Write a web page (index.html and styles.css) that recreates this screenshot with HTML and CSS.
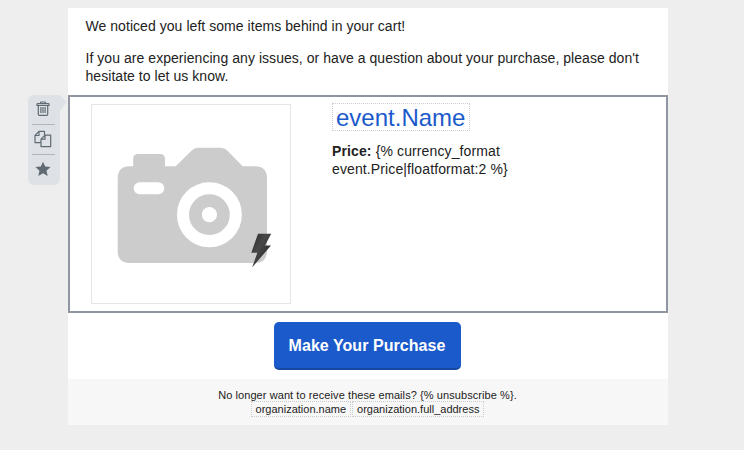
FILE: index.html
```
<!DOCTYPE html>
<html lang="en">
<head>
    <meta charset="UTF-8">
    <meta name="viewport" content="width=device-width, initial-scale=1.0">
    <title>Email editor</title>
    <link rel="stylesheet" href="styles.css">
</head>
<body>
    <div class="email">
        <div class="intro">
            <p>We noticed you left some items behind in your cart!</p>
            <p>If you are experiencing any issues, or have a question about your purchase, please don't hesitate to let us know.</p>
        </div>

        <div class="product">
            <div class="toolbar">
                <button title="Delete">
                    <svg width="14" height="16" viewBox="0 0 14 16" fill="none" stroke="#606a72" stroke-width="1.2">
                        <path d="M1 4V3.2Q1 2.6 1.7 2.6H12.3Q13 2.6 13 3.2V4.5H1ZM4.6 2.6V1.6Q4.6 1 5.2 1H8.8Q9.4 1 9.4 1.6V2.6M2.3 4.5V13.2Q2.3 14.4 3.4 14.4H10.6Q11.7 14.4 11.7 13.2V4.5M4.9 6V12M7 6V12M9.1 6V12"/>
                    </svg>
                </button>
                <button title="Duplicate">
                    <svg width="18" height="18" viewBox="0 0 18 18" fill="none" stroke="#606a72" stroke-width="1.2" stroke-linejoin="round">
                        <path d="M6.5 12.6H1V5.5L5 1.4H10.5V5M5 1.4V5.5H1M7 9.2L11 5.2H16.7V16.6H7ZM11 5.2V9.2H7"/>
                    </svg>
                </button>
                <button title="Favorite">
                    <svg width="16" height="16" viewBox="0 0 16 16" fill="#606a72">
                        <path d="M8 .7L10.2 5.6L15.5 6.1L11.5 9.7L12.7 15L8 12.3L3.3 15L4.5 9.7L.5 6.1L5.8 5.6Z"/>
                    </svg>
                </button>
            </div>

            <svg class="photo" width="200" height="200" viewBox="0 0 200 200">
                <defs>
                    <linearGradient id="bolt" x1="0" y1="0" x2="1" y2="1">
                        <stop offset="0" stop-color="#2a2a2a"/>
                        <stop offset=".4" stop-color="#484848"/>
                        <stop offset="1" stop-color="#1c1c1c"/>
                    </linearGradient>
                </defs>
                <rect x=".5" y=".5" width="199" height="199" fill="#fff" stroke="#e5e5e5"/>
                <path fill="#ccc" d="M38.7 62.3H42.2V55Q42.2 50 47.2 50H69Q74 50 74 55V62.3H84.7L101 46.2Q103.5 43.7 107 43.7H130Q133.5 43.7 136 46.2L151.7 62.3H164Q176 62.3 176 74.3V147Q176 159 164 159H38.7Q26.7 159 26.7 147V74.3Q26.7 62.3 38.7 62.3Z"/>
                <rect x="42.7" y="78.3" width="30.6" height="12" rx="6" fill="#fff"/>
                <circle cx="118.4" cy="110.7" r="26.4" fill="none" stroke="#fff" stroke-width="12.1"/>
                <circle cx="118.4" cy="110.7" r="7.6" fill="#fff"/>
                <path fill="url(#bolt)" d="M167 129.7H180.2L174 141.5H180L161.2 163.3L166.3 148.7H160.3Z"/>
            </svg>

            <div class="details">
                <a class="tag name">event.Name</a>
                <p><b>Price:</b> {% currency_format event.Price|floatformat:2 %}</p>
            </div>
        </div>

        <div class="action">
            <a class="buy">Make Your Purchase</a>
        </div>

        <div class="footer">
            <div class="unsubscribe">No longer want to receive these emails? {% unsubscribe %}.</div>
            <div class="org">
                <span class="tag">organization.name</span>
                <span class="tag">organization.full_address</span>
            </div>
        </div>
    </div>
</body>
</html>
```
FILE: styles.css
```
* { box-sizing: border-box; }
body { margin: 0; padding: 8px 0 0 68px; background: #eee; color: #222; font: 14px/18px "Liberation Sans", Arial, sans-serif; }
p { margin: 0; letter-spacing: 0.05px; }
.email { width: 600px; background: #fff; }

.intro { height: 87px; padding: 9px 18px 0 17.5px; }
.intro p + p { margin-top: 14px; }

.product { position: relative; display: flex; height: 218px; padding: 7px 21px; border: 2px solid #9096a0; }
.photo { display: block; flex: none; }
.details { width: 200px; margin-left: 41px; }
.details p { margin-top: 11px; letter-spacing: 0.12px; }
.tag { border: 1px dotted #ccc; }
.name { display: block; width: 138px; height: 28px; margin-top: -1px; padding: 1px 3px 0; color: #1b5acb; font-size: 24px; line-height: 26px; white-space: nowrap; }

/* block controls hanging off the left edge */
.toolbar { position: absolute; top: -2px; left: -42px; width: 32px; height: 90px; padding: 0 4px; background: #dee2e6; border-radius: 6px; }
.toolbar::after { content: ""; position: absolute; top: 0; left: 24px; width: 15px; height: 16px; background: #dee2e6; clip-path: polygon(0 0, 8px 0, 15px 7px, 8px 16px, 0 16px); }
.toolbar button { position: relative; z-index: 1; display: flex; align-items: center; justify-content: center; width: 23px; height: 30px; padding: 0 1px 1px 0; border: 0; border-bottom: 1px solid #aeb5bb; background: none; }
.toolbar button:last-child { padding-bottom: 2px; border-bottom: 0; }
.toolbar svg { flex: none; }

.action { display: flex; justify-content: center; height: 66px; padding: 9px 2px 0 0; }
.buy { width: 187px; height: 48px; border-bottom: 2px solid #15489f; border-radius: 5px; background: #1b5acb; color: #fff; font-size: 16px; font-weight: bold; line-height: 47px; letter-spacing: 0.05px; text-align: center; }

.footer { height: 46px; padding-top: 9px; background: #f7f7f7; font-size: 11px; line-height: 14px; text-align: center; }
.unsubscribe { height: 13px; padding-right: 1px; letter-spacing: 0.08px; }
.org { display: flex; justify-content: center; gap: 1px; padding-right: 1px; }
.org .tag { height: 16px; padding: 0 4px; line-height: 14px; }
```
